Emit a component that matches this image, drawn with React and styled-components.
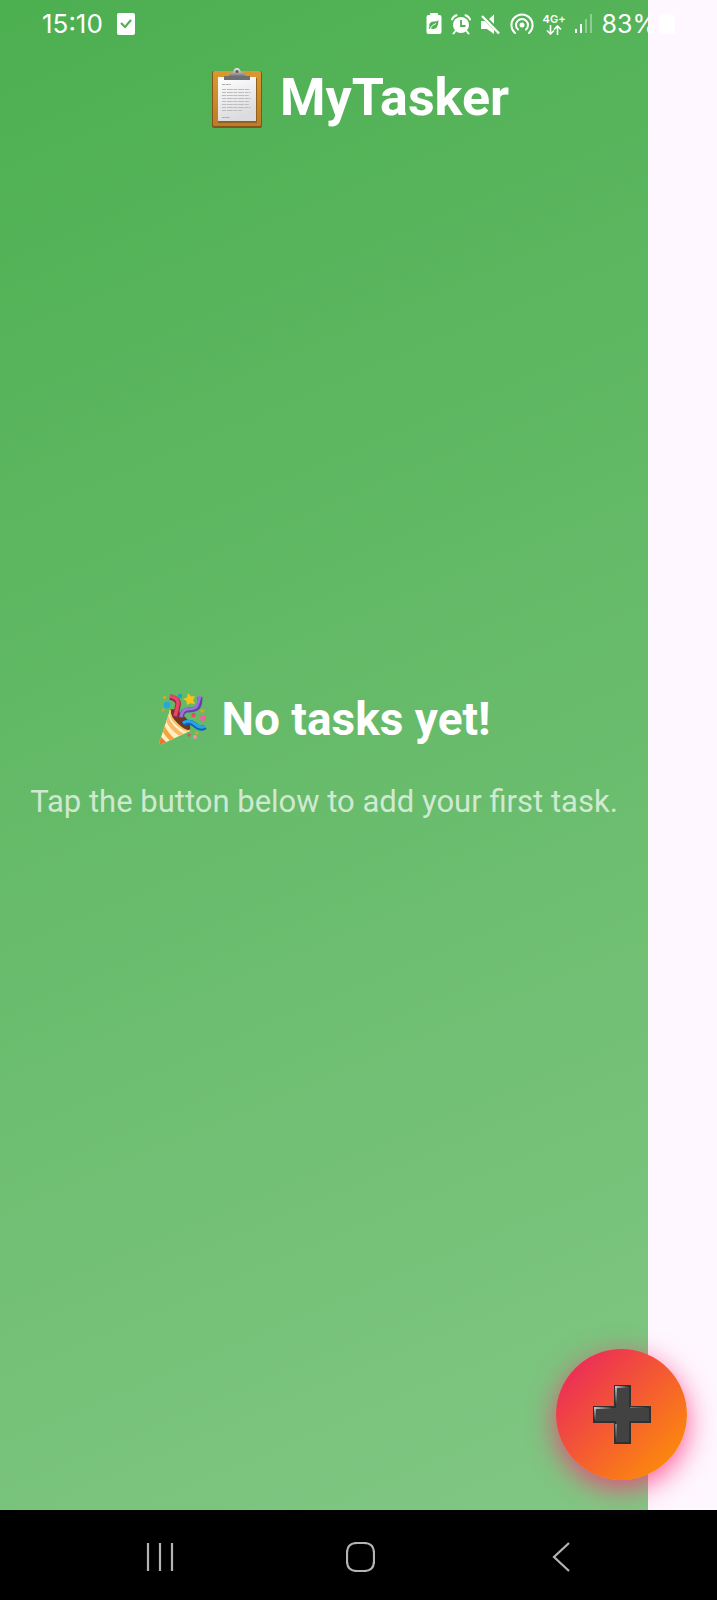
import React from "react";
import styled, { createGlobalStyle } from "styled-components";

const GlobalStyle = createGlobalStyle`
  * { box-sizing: border-box; }
  html, body { margin: 0; background: #fef7ff; }
  body { font-family: Roboto, "Liberation Sans", sans-serif; }
`;

const Phone = styled.div`
  display: flex;
  flex-direction: column;
  min-height: 100vh;
`;

const Screen = styled.div`
  --strip: 69px;
  position: relative;
  flex: 1;
  display: flex;
  flex-direction: column;
  background: linear-gradient(157deg, #4caf50, #81c784) no-repeat 0 0 /
    calc(100% - var(--strip)) 100%;
`;

const StatusBar = styled.div`
  display: flex;
  align-items: center;
  justify-content: space-between;
  height: 48px;
  padding: 0 42px;
  color: #fff;
`;

const StatusGroup = styled.div`
  display: flex;
  align-items: center;
  gap: ${(p) => p.$gap}px;
`;

const StatusText = styled.span`
  font: 400 ${(p) => p.$size}px/32px Inter, Roboto, sans-serif;
`;

const Network = styled.div`
  display: flex;
  flex-direction: column;
  align-items: center;
  font: 600 11px/11px Inter, sans-serif;
`;

const Header = styled.header`
  display: flex;
  align-items: center;
  justify-content: center;
  gap: 18px;
  height: 100px;
  padding-left: 4px;
`;

const Title = styled.h1`
  margin: 0;
  color: #fff;
  font-size: 52px;
  line-height: 60px;
  font-weight: 700;
`;

const Empty = styled.main`
  flex: 1;
  display: flex;
  flex-direction: column;
  align-items: center;
  justify-content: center;
  gap: 34px;
  margin-right: var(--strip);
  padding-bottom: 142px;
`;

const EmptyHeading = styled.div`
  display: flex;
  align-items: center;
  gap: 14px;
  padding-left: 2px;
`;

const EmptyTitle = styled.h2`
  margin: 0;
  color: #fff;
  font-size: 46px;
  line-height: 54px;
  font-weight: 700;
`;

const EmptyHint = styled.p`
  margin: 0;
  color: rgba(255, 255, 255, 0.7);
  font-size: 31px;
  line-height: 44px;
  white-space: nowrap;
`;

const AddButton = styled.button`
  position: absolute;
  right: 30px;
  bottom: 30px;
  display: grid;
  place-items: center;
  width: 131px;
  height: 131px;
  padding: 0;
  border: 0;
  border-radius: 50%;
  background: linear-gradient(135deg, #e91e63, #ff9800);
  box-shadow: 0 8px 28px rgba(255, 45, 120, 0.8);
  cursor: pointer;
`;

const NavBar = styled.nav`
  display: grid;
  grid-template-columns: repeat(3, 1fr);
  align-items: center;
  height: 90px;
  padding: 4px 56px 0 60px;
  background: #000;
`;

const NavButton = styled.button`
  display: flex;
  align-items: center;
  justify-content: center;
  height: 60px;
  padding: 0;
  border: 0;
  background: none;
  color: #b4b4b4;
  cursor: pointer;
`;

const TaskBadge = () => (
  <svg width="18" height="22" viewBox="0 0 18 22" aria-hidden="true">
    <rect width="18" height="22" rx="2" fill="#fff" />
    <path d="M4 10l4 4 6-7" fill="none" stroke="#50b154" strokeWidth="2.2" />
  </svg>
);

const PowerSaving = () => (
  <svg width="16" height="22" viewBox="0 0 16 22" aria-hidden="true">
    <path
      d="M5 0h6a1 1 0 0 1 1 1v1h1.500q2 0 2 2v15q0 2-2 2h-11q-2 0-2-2V4q0-2 2-2H4V1a1 1 0 0 1 1-1z"
      fill="#fff"
    />
    <path d="M12.500 7Q12.500 16 7 16Q5.500 16 4.500 15L3.500 16L2.500 15L3.500 14Q2 8.500 8.500 8.500Q11 8.500 12.500 7z" fill="#50b154" />
    <path d="M4.500 15Q6 12 10 10.500" fill="none" stroke="#fff" strokeWidth="1" />
  </svg>
);

const Alarm = () => (
  <svg width="20" height="21" viewBox="0 0 20 21" aria-hidden="true">
    <circle cx="10" cy="11" r="8" fill="#fff" />
    <path
      d="M1 5.500Q2 2.500 5.500 1.200M19 5.500Q18 2.500 14.500 1.200M4.500 17L2.500 19.500M15.500 17l2 2.500"
      fill="none"
      stroke="#fff"
      strokeWidth="2"
      strokeLinecap="round"
    />
    <path d="M10 6v6h4.500" fill="none" stroke="#50b154" strokeWidth="1.800" />
  </svg>
);

const Muted = () => (
  <svg width="21" height="21" viewBox="0 0 21 21" aria-hidden="true">
    <path d="M1 7h4l9 9v4l-7-5H1zM9 5l5-4.500V10z" fill="#fff" />
    <path d="M4 1.500L20 18" stroke="#52b256" strokeWidth="2" />
    <path d="M2 2L19 19.500" stroke="#fff" strokeWidth="2.400" />
  </svg>
);

const Hotspot = () => (
  <svg width="24" height="22" viewBox="0 0 24 22" aria-hidden="true">
    <circle cx="12" cy="12" r="2.500" fill="#fff" />
    <path
      d="M5 20A10.600 10.600 0 1 1 19 20M8 16.500A6 6 0 1 1 16 16.500"
      fill="none"
      stroke="#fff"
      strokeWidth="2"
      strokeLinecap="round"
    />
  </svg>
);

const DataArrows = () => (
  <svg width="16" height="10" viewBox="0 0 16 10" aria-hidden="true">
    <path
      d="M4.500 0v8.500M1 5.500l3.500 3.500L8 5.500M11.500 10V1.500M8 4.500L11.500 1L15 4.500"
      fill="none"
      stroke="#fff"
      strokeWidth="1.600"
    />
  </svg>
);

const Signal = () => (
  <svg width="18" height="20" viewBox="0 0 18 20" fill="#fff" aria-hidden="true">
    <rect y="15" width="2" height="4" />
    <rect x="5" y="10" width="2" height="9" />
    <rect x="10" y="5" width="2" height="14" opacity=".35" />
    <rect x="15" y="0" width="2" height="19" opacity=".35" />
  </svg>
);

const Battery = () => (
  <svg width="16" height="22" viewBox="0 0 16 22" fill="#fff" aria-hidden="true">
    <path d="M4 0h8v2h2q2 0 2 2v15q0 2-2 2H2q-2 0-2-2V4q0-2 2-2h2z" />
  </svg>
);

const Clipboard = () => (
  <svg width="50" height="60" viewBox="0 0 50 60" aria-hidden="true">
    <defs>
      <linearGradient id="board" x2="0" y2="1">
        <stop stopColor="#dc982f" />
        <stop offset="1" stopColor="#bd7c26" />
      </linearGradient>
      <linearGradient id="sheet" x2="0.300" y2="1">
        <stop stopColor="#fff" />
        <stop offset="1" stopColor="#dcdce0" />
      </linearGradient>
      <linearGradient id="clip" x2="0" y2="1">
        <stop stopColor="#f0f0f0" />
        <stop offset=".55" stopColor="#a5a8aa" />
        <stop offset="1" stopColor="#66696b" />
      </linearGradient>
    </defs>
    <rect y="3" width="50" height="57" rx="2" fill="#84551a" />
    <rect x="1" y="3" width="48" height="55" rx="1.500" fill="url(#board)" />
    <rect x="6" y="10" width="39" height="45" fill="#93601e" />
    <rect x="6" y="9" width="38" height="44" fill="url(#sheet)" />
    <path d="M10 16.500h9M10 49.500h8" stroke="#aaa" strokeWidth="1" strokeDasharray="3 .7" />
    <path
      d="M10 21.500h28M10 24.500h29M10 27.500h27M10 30.500h29M10 33.500h28M10 36.500h27M10 39.500h29M10 42.500h20"
      stroke="#bcbcbe"
      strokeWidth="1"
      strokeDasharray="4 .8 6 .6"
    />
    <path
      d="M16 9l2.500-3.500Q19.500 4 21 4q1-4 4-4t4 4q2 0 3 1.500L34.500 9z"
      fill="url(#clip)"
    />
    <path d="M13 8h25v4H12V9q0-1 1-1z" fill="#6d7073" />
    <circle cx="25" cy="3.500" r="1.500" fill="#75524a" />
  </svg>
);

const PartyPopper = () => (
  <svg width="48" height="52" viewBox="0 0 48 52" aria-hidden="true">
    <defs>
      <clipPath id="cone">
        <path d="M11 17Q13 29 31 38L3 51Q.500 52 .500 49z" />
      </clipPath>
    </defs>
    <path d="M11 17Q13 29 31 38L3 51Q.500 52 .500 49z" fill="#fff0c4" />
    <g clipPath="url(#cone)">
      <path d="M7 22Q10 35 26 44" fill="none" stroke="#f8b968" strokeWidth="4" />
      <path d="M3 32Q6 41 16 49" fill="none" stroke="#f8a23c" strokeWidth="4.500" />
      <path d="M0 42l10 10H0z" fill="#ee762b" />
    </g>
    <path d="M11 17q4-3 13 5t7 15q-3 3-12-4T11 17z" fill="#723522" />
    <path d="M11 17q-1 7 8 15t12 5" fill="none" stroke="#f8c865" strokeWidth="1.700" />
    <path d="M11 4Q20 6 19 12T16 24" fill="none" stroke="#a71f46" strokeWidth="5.500" />
    <path d="M11 3Q20 5 19 11T16 23" fill="none" stroke="#e54868" strokeWidth="3.500" />
    <path d="M22 25q1-8 7-8t9-2 3-11" fill="none" stroke="#6340a9" strokeWidth="5" />
    <path d="M22 24q1-8 7-8t8-2 4-11" fill="none" stroke="#9c72d8" strokeWidth="3" />
    <path d="M24 31q6-4 12 1t10 2" fill="none" stroke="#0864b4" strokeWidth="5" />
    <path d="M24 30q6-4 12 1t10 2" fill="none" stroke="#2ba0ec" strokeWidth="3" />
    <path d="M29 0l3 3.500 4-.5-2 4 2 4-4.500-.8L28 12l-.5-4L24 6l4-1.500z" fill="#fbc219" />
    <circle cx="8" cy="12" r="3.300" fill="#24a9dd" />
    <circle cx="21" cy="3" r="2.200" fill="#1ea3b9" />
    <circle cx="34.500" cy="22" r="2.200" fill="#e54d67" />
    <circle cx="44" cy="25" r="3" fill="#ec669c" />
    <circle cx="30" cy="42" r="1.800" fill="#e65368" />
    <circle cx="36" cy="44" r="2" fill="#ed91ae" />
    <g fill="#d6a821">
      <circle cx="5.500" cy="4.500" r="1.700" />
      <circle cx="4" cy="17" r="1.500" />
      <path d="M42 16l4 1-2 3-3-1zM37 38l3 2-3 2-1-2z" />
    </g>
  </svg>
);

const Plus = () => (
  <svg width="58" height="59" viewBox="0 0 58 59" aria-hidden="true">
    <defs>
      <linearGradient id="shine">
        <stop stopColor="#c4c4c4" />
        <stop offset="1" stopColor="#c4c4c4" stopOpacity="0" />
      </linearGradient>
      <linearGradient id="shineDown" x2="0" y2="1">
        <stop stopColor="#bdbdbd" />
        <stop offset="1" stopColor="#bdbdbd" stopOpacity="0" />
      </linearGradient>
    </defs>
    <path d="M21 0h17v21h20v17H38v21H21V38H0V21h21z" fill="#303030" />
    <path d="M23 2h13v21h20v13H36v21H23V36H2V23h21z" fill="#424242" />
    <rect x="22" y="1" width="13" height="2" fill="url(#shine)" />
    <rect x="22" y="1" width="2" height="18" fill="url(#shineDown)" />
    <rect x="1" y="22" width="18" height="2" fill="url(#shine)" />
    <rect x="1" y="22" width="2" height="13" fill="url(#shineDown)" />
    <rect x="37" y="22" width="18" height="1" fill="url(#shine)" opacity=".5" />
    <rect x="22" y="39" width="2" height="16" fill="url(#shineDown)" opacity=".6" />
  </svg>
);

const navItems = [
  { label: "Recent apps", path: "M2 1v28M14 1v28M26 1v28" },
  { label: "Home", path: "M11 1h7Q28 1 28 11v8q0 10-10 10h-7Q1 29 1 19v-8Q1 1 11 1z" },
  { label: "Back", path: "M23 1L8 15l15 14" },
];

export default function App() {
  return (
    <>
      <GlobalStyle />
      <Phone>
        <Screen>
          <StatusBar>
            <StatusGroup $gap={14}>
              <StatusText as="time" $size={26}>15:10</StatusText>
              <TaskBadge />
            </StatusGroup>
            <StatusGroup $gap={9}>
              <PowerSaving />
              <Alarm />
              <Muted />
              <Hotspot />
              <Network>
                <span>4G+</span>
                <DataArrows />
              </Network>
              <Signal />
              <StatusGroup $gap={2}>
                <StatusText $size={25}>83%</StatusText>
                <Battery />
              </StatusGroup>
            </StatusGroup>
          </StatusBar>
          <Header>
            <Clipboard />
            <Title>MyTasker</Title>
          </Header>
          <Empty>
            <EmptyHeading>
              <PartyPopper />
              <EmptyTitle>No tasks yet!</EmptyTitle>
            </EmptyHeading>
            <EmptyHint>Tap the button below to add your first task.</EmptyHint>
          </Empty>
          <AddButton type="button" aria-label="Add task">
            <Plus />
          </AddButton>
        </Screen>
        <NavBar aria-label="System">
          {navItems.map(({ label, path }) => (
            <NavButton key={label} type="button" aria-label={label}>
              <svg width="29" height="30" viewBox="0 0 29 30" aria-hidden="true">
                <path d={path} fill="none" stroke="currentColor" strokeWidth="2.200" />
              </svg>
            </NavButton>
          ))}
        </NavBar>
      </Phone>
    </>
  );
}
